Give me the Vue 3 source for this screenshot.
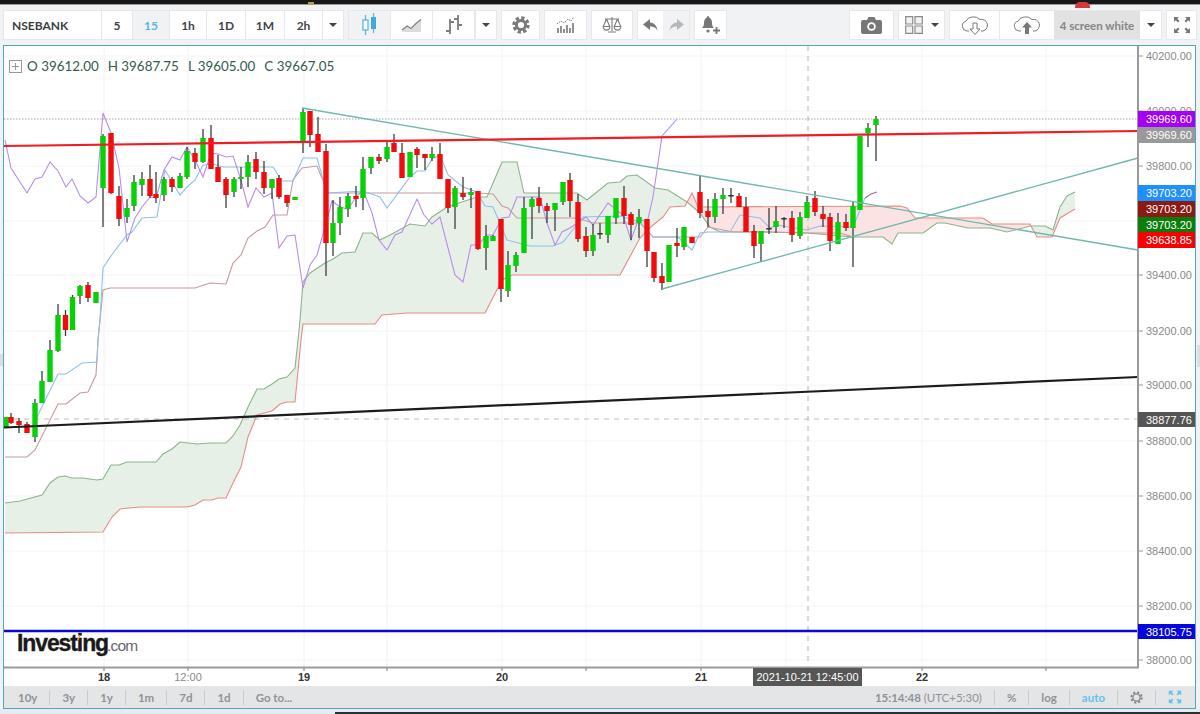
<template>
  <div class="page">
    <div class="top-strip">
      <span class="glint"></span>
      <span class="badge"></span>
    </div>

    <div class="toolbar">
      <div class="group">
        <div class="symbol">NSEBANK</div>
        <div
          v-for="t in timeframes"
          :key="t.label"
          class="btn"
          :class="{ active: t.active }"
          :style="{ width: t.w + 'px' }"
        >{{ t.label }}</div>
        <div class="btn caret-btn"><i class="caret"></i></div>
      </div>

      <div class="group">
        <div class="btn icon-btn wide on">
          <svg width="20" height="26" viewBox="0 0 20 26">
            <path d="M5.5 3v20M13.5 1v20" stroke="#59b6e6" stroke-width="1.2" />
            <rect x="3" y="8" width="5" height="10" fill="#fff" stroke="#59b6e6" stroke-width="1.3" />
            <rect x="11" y="5" width="5" height="12" fill="#3fa9e0" />
          </svg>
        </div>
        <div class="btn icon-btn wide">
          <svg width="22" height="16" viewBox="0 0 22 16">
            <path d="M1 14 6 9.5l4 2.5 5-5 5-4V15H1z" fill="#dcdcdc" />
            <path d="M1 13 6 9l4 2.5 5-5 5-4" fill="none" stroke="#808080" stroke-width="1.3" />
          </svg>
        </div>
        <div class="btn icon-btn wide">
          <svg width="20" height="24" viewBox="0 0 20 24">
            <path d="M6 6v15M2 18h4M6 9h4M14 2v15M10 6h4M14 12h4" fill="none" stroke="#7c7c7c" stroke-width="1.8" />
          </svg>
        </div>
        <div class="btn caret-btn"><i class="caret"></i></div>
      </div>

      <div class="group">
        <div class="btn icon-btn gear-btn">
          <svg width="18" height="18" viewBox="0 0 18 18">
            <circle cx="9" cy="9" r="7" fill="none" stroke="#7a7a7a" stroke-width="3.4" stroke-dasharray="3.2 2.3" />
            <circle cx="9" cy="9" r="4.6" fill="none" stroke="#7a7a7a" stroke-width="3" />
          </svg>
        </div>
      </div>

      <div class="group">
        <div class="btn icon-btn ind-btn">
          <svg width="20" height="20" viewBox="0 0 20 20">
            <path d="M2 18v-5M5 18v-7M8 18v-4M11 18v-8M14 18v-5M17 18V8" stroke="#777" stroke-width="1.6" />
            <path d="M1 9l4-3 3 2 4-4 3 2 3-4" fill="none" stroke="#777" stroke-width="1" stroke-dasharray="1.5 1" />
          </svg>
        </div>
      </div>

      <div class="group">
        <div class="btn icon-btn scale-btn">
          <svg width="20" height="18" viewBox="0 0 20 18">
            <path d="M10 1v14M3 3h14M6 16h8M4.5 3 1.5 10M4.5 3l3 7M15.5 3l-3 7M15.5 3l3 7" fill="none" stroke="#7a7a7a" stroke-width="1.1" />
            <path d="M1.2 10.5h6.6a3.3 3.6 0 0 1-6.6 0zM12.2 10.5h6.6a3.3 3.6 0 0 1-6.6 0z" fill="#fff" stroke="#7a7a7a" stroke-width="1.1" />
          </svg>
        </div>
      </div>

      <div class="group">
        <div class="btn icon-btn undo-btn">
          <svg width="15" height="13" viewBox="0 0 15 13">
            <path d="M7 0 0 5.5 7 11V7.5c3.5 0 6 1 7.5 4.500C14 7 11.5 3.800 7 3.500z" fill="#777" />
          </svg>
        </div>
        <div class="btn icon-btn redo-btn">
          <svg width="15" height="13" viewBox="0 0 15 13">
            <path d="M8 0l7 5.5L8 11V7.5c-3.5 0-6 1-7.5 4.500C1 7 3.5 3.800 8 3.500z" fill="#b4b8bc" />
          </svg>
        </div>
      </div>

      <div class="group">
        <div class="btn icon-btn bell-btn">
          <svg width="20" height="20" viewBox="0 0 20 20">
            <path d="M7 1c.8 0 1.200.8 1.200 1.500C10.500 3.500 11 6 11 8c0 2.500.8 4 2 5H1c1.200-1 2-2.500 2-5 0-2 .5-4.500 2.800-5.500C5.800 1.800 6.200 1 7 1z" fill="#777" />
            <circle cx="7" cy="16" r="1.600" fill="#777" />
            <path d="M15.500 12v7M12 15.500h7" stroke="#777" stroke-width="1.800" />
          </svg>
        </div>
      </div>

      <div class="group push">
        <div class="btn icon-btn cam-btn">
          <svg width="21" height="17" viewBox="0 0 21 17">
            <path d="M2 3h4l1.500-3h6L15 3h4a2 2 0 0 1 2 2v10a2 2 0 0 1-2 2H2a2 2 0 0 1-2-2V5a2 2 0 0 1 2-2z" fill="#777" />
            <circle cx="10.500" cy="9.500" r="4.300" fill="#fff" />
            <circle cx="10.500" cy="9.500" r="2.500" fill="#777" />
          </svg>
        </div>
      </div>

      <div class="group">
        <div class="btn icon-btn layout-btn">
          <svg width="18" height="18" viewBox="0 0 18 18">
            <path d="M.7.7h7V8h-7zM10 .7h7.300V8H10zM.7 10h7v7.300h-7zM10 10h7.300v7.300H10z" fill="#f2f2f2" stroke="#8a8a8a" stroke-width="1.200" />
          </svg>
          <i class="caret"></i>
        </div>
      </div>

      <div class="group">
        <div class="btn icon-btn cloud-btn">
          <svg width="28" height="20" viewBox="0 0 28 20">
            <path d="M8 16H6a5 5 0 0 1-1-9.800A8 6.500 0 0 1 19 4.500 5.800 5.800 0 0 1 22 16h-2" fill="none" stroke="#7a7a7a" stroke-width="1" />
            <path d="M12 8h4v6h3l-5 5.500L9 14h3z" fill="#fff" stroke="#7a7a7a" stroke-width="1" />
          </svg>
        </div>
        <div class="btn icon-btn cloud-btn up">
          <svg width="28" height="20" viewBox="0 0 28 20">
            <path d="M8 16H6a5 5 0 0 1-1-9.800A8 6.500 0 0 1 19 4.500 5.800 5.800 0 0 1 22 16h-2" fill="none" stroke="#7a7a7a" stroke-width="1" />
            <path d="M14 7l5 5.500h-3V19h-4v-6.500H9z" fill="#777" />
          </svg>
        </div>
        <div class="btn preset">4 screen white</div>
        <div class="btn caret-btn preset-caret"><i class="caret"></i></div>
      </div>

      <div class="group">
        <div class="btn icon-btn full-btn">
          <svg width="18" height="18" viewBox="0 0 18 18">
            <path d="M1 1h5L4.300 2.700 6.500 5 5 6.500 2.700 4.300 1 6zM17 1h-5l1.700 1.700L11.500 5 13 6.500l2.300-2.200L17 6zM1 17h5l-1.700-1.700 2.200-2.300L5 11.500l-2.300 2.200L1 12zM17 17h-5l1.700-1.700-2.200-2.300 1.500-1.500 2.300 2.200L17 12z" fill="#777" />
          </svg>
        </div>
      </div>
    </div>

    <div class="chart">
      <svg class="plot" viewBox="4 46 1191 640" width="1191" height="640">
        <!-- grid -->
        <path
          v-for="x in gridX"
          :key="'gx' + x"
          :d="`M${x} 46V667`"
          stroke="#f1f2f3"
          stroke-width="1"
        />
        <path
          v-for="t in ticks"
          :key="'gy' + t.y"
          :d="`M4 ${t.y}H1138`"
          stroke="#f3f4f5"
          stroke-width="1"
        />

        <!-- ichimoku cloud -->
        <path :d="cloud.green" fill="#e7f0e7" />
        <path :d="cloud.red" fill="#fbe3e3" />
        <polyline :points="pts(senkouA)" class="ln" stroke="#8ab58a" />
        <polyline :points="pts(senkouB)" class="ln" stroke="#e58c84" />
        <polyline :points="pts(kijun)" class="ln" stroke="#c79a9a" />
        <polyline :points="pts(tenkan)" class="ln" stroke="#8cc0ee" />
        <polyline :points="pts(chikou)" class="ln" stroke="#b78cec" />
        <polyline points="865,198 871,194 877,192" class="ln" stroke="#9a7098" />

        <!-- levels under the candles -->
        <path d="M4 119H1138" stroke="#a8a8a8" stroke-width="1" stroke-dasharray="1.5 1.5" />
        <path d="M4 419H1138" stroke="#bdbdbd" stroke-width="1" stroke-dasharray="5 5" />
        <path d="M808 46V667" stroke="#b4b4b4" stroke-width="1" stroke-dasharray="5 5" />

        <!-- candles -->
        <g v-for="c in candles" :key="c[0]">
          <path :d="`M${c[0]} ${c[3]}V${c[4]}`" stroke="#3c3c3c" stroke-width="1.3" />
          <rect
            :x="c[0] - 2.7"
            :y="c[1]"
            width="5.4"
            :height="Math.max(c[2] - c[1], 1.5)"
            :fill="bodyColor[c[5]]"
          />
        </g>

        <!-- drawn trend lines -->
        <path d="M302 108 1138 250" stroke="#6fb8ae" stroke-width="1.3" fill="none" />
        <path d="M662 289 1138 158" stroke="#6fb8ae" stroke-width="1.3" fill="none" />
        <path d="M4 146 1138 131" stroke="#f01c24" stroke-width="2.2" fill="none" />
        <path d="M4 427.5 1138 377" stroke="#1c1c1c" stroke-width="2.2" fill="none" />
        <path d="M4 631H1138" stroke="#0808dc" stroke-width="2.4" fill="none" />

        <!-- logo -->
        <text x="17" y="651" class="logo">Investing</text>
        <text x="107" y="651" class="logo-com">.com</text>
        <path d="M77 640l2.500-5 .8 1-1.800 4z" fill="#f0a020" />

        <!-- price axis -->
        <path d="M1138 46V668" stroke="#9a9a9a" stroke-width="2" />
        <g v-for="t in visibleTicks" :key="t.label">
          <path :d="`M1139 ${t.y}h4`" stroke="#999" stroke-width="1" />
          <text x="1146" :y="t.y + 4" class="price">{{ t.label }}</text>
        </g>
        <g v-for="l in priceTags" :key="l.y">
          <rect x="1138" :y="l.y" width="57" :height="l.h" :fill="l.bg" />
          <text x="1146" :y="l.y + l.h / 2 + 4" class="price tag">{{ l.label }}</text>
        </g>

        <!-- time axis -->
        <path d="M4 667.5H1139" stroke="#9a9a9a" stroke-width="2" />
        <path
          v-for="x in gridX"
          :key="'tx' + x"
          :d="`M${x} 668v3`"
          stroke="#777"
          stroke-width="1"
        />
        <text
          v-for="d in days"
          :key="d.label"
          :x="d.x"
          y="681"
          class="day"
          :class="{ minor: d.minor }"
        >{{ d.label }}</text>
        <rect x="753" y="668" width="109" height="18" fill="#565656" />
        <text x="807.5" y="681" class="date-tag">2021-10-21 12:45:00</text>
      </svg>

      <div class="legend">
        <span class="legend-box"></span>
        <span v-for="o in ohlc" :key="o" class="legend-val">{{ o }}</span>
      </div>

      <div class="range-bar">
        <template v-for="(r, i) in ranges" :key="r">
          <i v-if="i" class="sep"></i>
          <span>{{ r }}</span>
        </template>
        <span class="clock">15:14:48 <em>(UTC+5:30)</em></span>
        <i class="sep"></i>
        <span>%</span>
        <i class="sep"></i>
        <span>log</span>
        <i class="sep"></i>
        <span class="auto">auto</span>
        <i class="sep"></i>
        <svg width="13" height="13" viewBox="0 0 18 18">
          <circle cx="9" cy="9" r="7.2" fill="none" stroke="#858585" stroke-width="2.6" stroke-dasharray="3 2.65" />
          <circle cx="9" cy="9" r="5" fill="none" stroke="#858585" stroke-width="1.8" />
        </svg>
        <i class="sep"></i>
        <svg class="expand" width="14" height="14" viewBox="0 0 18 18">
          <path d="M1 1h6L4.800 3 7 5.500 5.500 7 3 4.800 1 7zM17 1h-6l2.200 2L11 5.500 12.500 7 15 4.800 17 7zM1 17h6l-2.200-2L7 12.500 5.500 11 3 13.200 1 11zM17 17h-6l2.200-2-2.200-2.500 1.500-1.500 2.500 2.200 2-2.200z" fill="#69bfe8" />
        </svg>
      </div>
    </div>

    <div class="bottom-strip">
      <span class="dark"></span>
    </div>

    <span class="handle left"></span>
    <span class="handle right"></span>
  </div>
</template>

<script setup>
const timeframes = [
  { label: '5', w: 31 },
  { label: '15', w: 37, active: true },
  { label: '1h', w: 37 },
  { label: '1D', w: 39 },
  { label: '1M', w: 39 },
  { label: '2h', w: 38 },
]

const ohlc = ['O 39612.00', 'H 39687.75', 'L 39605.00', 'C 39667.05']
const ranges = ['10y', '3y', '1y', '1m', '7d', '1d', 'Go to...']

const gridX = [104, 188, 304, 387, 502, 586, 701, 786, 922, 1046]

const days = [
  { label: '18', x: 104 },
  { label: '12:00', x: 188, minor: true },
  { label: '19', x: 304 },
  { label: '20', x: 502 },
  { label: '21', x: 701 },
  { label: '22', x: 922 },
]

const ticks = [
  ['40200.00', 56], ['40000.00', 111], ['39800.00', 166], ['39600.00', 221],
  ['39400.00', 275], ['39200.00', 331], ['39000.00', 385], ['38800.00', 441],
  ['38600.00', 496], ['38400.00', 551], ['38200.00', 606], ['38000.00', 660],
].map(([label, y]) => ({ label, y }))

// 39600 sits fully behind the price tags
const visibleTicks = ticks.filter((t) => t.label !== '39600.00')

const priceTags = [
  { label: '39969.60', y: 111, h: 16, bg: '#a400f5' },
  { label: '39969.60', y: 127, h: 16, bg: '#999999' },
  { label: '39703.20', y: 185, h: 16, bg: '#1e90ff' },
  { label: '39703.20', y: 201, h: 16, bg: '#8b1a12' },
  { label: '39703.20', y: 217, h: 15, bg: '#0b7d0b' },
  { label: '39638.85', y: 232, h: 16, bg: '#f70000' },
  { label: '38877.76', y: 412, h: 15, bg: '#555555' },
  { label: '38105.75', y: 624, h: 15, bg: '#0606dc' },
]

const bodyColor = { g: '#08d008', r: '#f00c0c', d: '#333333' }

// x, body top, body bottom, wick top, wick bottom, colour
const candles = [
  [6, 417, 427, 417, 427, 'g'], [11, 417, 423, 413, 424, 'r'], [19, 421, 425, 418, 433, 'r'],
  [27, 424, 433, 422, 433, 'r'], [35, 403, 437, 399, 442, 'g'], [42, 381, 403, 371, 403, 'g'],
  [50, 350, 382, 340, 382, 'g'], [58, 315, 351, 304, 352, 'g'], [65.5, 315, 330, 310, 336, 'r'],
  [72.5, 297, 330, 295, 330, 'g'], [80, 286, 296, 285, 304, 'g'], [88, 285, 298, 282, 302, 'r'],
  [96, 292, 303, 292, 303, 'g'], [103, 136, 188, 134, 227, 'g'], [111, 133, 193, 133, 194, 'r'],
  [119, 196, 219, 186, 226, 'r'], [127, 208, 217, 199, 223, 'g'], [134, 182, 206, 175, 211, 'g'],
  [142, 179, 185, 172, 196, 'g'], [150, 179, 196, 165, 198, 'r'], [156, 194, 198, 172, 203, 'r'],
  [164, 179, 195, 177, 201, 'g'], [172, 179, 187, 177, 192, 'r'], [180, 176, 188, 173, 188, 'g'],
  [187, 151, 177, 147, 179, 'g'], [195, 153, 162, 148, 169, 'r'], [203, 138, 162, 129, 163, 'g'],
  [211, 138, 169, 125, 169, 'r'], [218, 167, 182, 155, 182, 'r'], [226, 179, 195, 177, 208, 'r'],
  [234, 179, 192, 177, 197, 'g'], [241, 177, 179, 167, 189, 'g'], [248, 162, 177, 155, 187, 'g'],
  [256, 159, 172, 152, 179, 'r'], [264, 172, 188, 161, 194, 'r'], [272, 179, 188, 179, 199, 'g'],
  [279, 178, 197, 175, 199, 'r'], [287, 195, 203, 195, 207, 'r'], [295, 197, 200, 197, 200, 'g'],
  [303, 112, 143, 108, 153, 'g'], [310, 111, 135, 111, 147, 'r'], [318, 134, 152, 117, 152, 'r'],
  [326, 151, 243, 144, 276, 'r'], [333, 223, 243, 200, 256, 'g'], [340, 207, 223, 197, 235, 'g'],
  [348, 196, 209, 193, 217, 'g'], [356, 196, 199, 186, 207, 'r'], [363, 169, 198, 157, 210, 'g'],
  [371, 157, 168, 157, 174, 'g'], [379, 157, 161, 154, 164, 'r'], [387, 147, 159, 140, 162, 'g'],
  [394, 143, 152, 134, 152, 'r'], [402, 153, 178, 143, 178, 'r'], [410, 152, 177, 152, 177, 'g'],
  [417, 149, 155, 147, 168, 'r'], [425, 154, 158, 154, 170, 'r'], [432, 154, 158, 147, 161, 'g'],
  [440, 154, 179, 143, 179, 'r'], [448, 179, 208, 179, 213, 'r'], [455, 188, 207, 186, 229, 'g'],
  [463, 193, 197, 177, 200, 'r'], [471, 192, 195, 188, 208, 'g'], [478, 191, 249, 191, 250, 'r'],
  [486, 236, 248, 225, 270, 'g'], [493, 236, 241, 235, 241, 'g'], [501, 219, 289, 219, 302, 'r'],
  [508, 265, 291, 251, 297, 'g'], [516, 255, 266, 252, 272, 'g'], [524, 208, 253, 197, 253, 'g'],
  [532, 199, 207, 197, 239, 'g'], [539, 198, 206, 187, 213, 'r'], [547, 206, 211, 203, 223, 'r'],
  [555, 203, 210, 203, 231, 'g'], [563, 182, 202, 182, 205, 'g'], [570, 180, 201, 173, 217, 'r'],
  [578, 202, 239, 194, 242, 'r'], [586, 236, 251, 227, 257, 'r'], [593, 235, 251, 224, 256, 'g'],
  [600, 233, 234, 223, 239, 'd'], [608, 216, 235, 216, 243, 'g'], [616, 198, 218, 198, 224, 'g'],
  [624, 198, 216, 186, 224, 'r'], [631, 214, 225, 212, 240, 'r'], [639, 217, 223, 209, 238, 'g'],
  [647, 219, 251, 219, 267, 'r'], [654, 252, 278, 252, 282, 'r'], [662, 276, 283, 263, 290, 'r'],
  [669, 245, 282, 245, 282, 'g'], [677, 243, 246, 228, 257, 'r'], [684, 227, 247, 227, 250, 'g'],
  [692, 237, 243, 237, 243, 'r'], [700, 192, 213, 175, 218, 'r'], [708, 211, 217, 199, 227, 'r'],
  [715, 199, 217, 193, 223, 'g'], [723, 195, 199, 188, 214, 'g'], [731, 195, 196, 188, 203, 'd'],
  [739, 196, 207, 193, 207, 'r'], [746, 207, 232, 197, 232, 'r'], [754, 231, 246, 225, 258, 'r'],
  [761, 231, 244, 231, 262, 'g'], [769, 228, 229, 208, 234, 'd'], [776, 221, 227, 206, 233, 'g'],
  [784, 218, 219, 217, 228, 'd'], [792, 218, 235, 211, 242, 'r'], [800, 217, 236, 212, 239, 'g'],
  [807, 202, 218, 196, 218, 'g'], [815, 198, 212, 191, 216, 'r'], [823, 214, 219, 206, 227, 'r'],
  [830, 217, 241, 213, 251, 'r'], [838, 222, 244, 213, 244, 'g'], [846, 222, 228, 214, 231, 'r'],
  [853, 206, 228, 202, 267, 'g'], [860, 136, 210, 136, 210, 'g'], [868, 128, 133, 123, 147, 'g'],
  [876, 119, 125, 116, 161, 'g'],
]

const chikou = [
  [5, 140], [11, 168], [27, 193], [35, 179], [42, 177], [50, 162], [58, 171], [66, 187], [72, 179],
  [80, 196], [88, 203], [96, 197], [103, 113], [111, 133], [119, 168], [127, 242], [135, 218],
  [142, 207], [150, 197], [156, 198], [164, 170], [172, 157], [180, 160], [187, 147], [195, 160],
  [203, 177], [211, 153], [218, 154], [226, 157], [233, 156], [241, 180], [248, 207], [256, 188],
  [264, 197], [272, 193], [279, 248], [287, 236], [295, 235], [303, 288], [310, 265], [317, 255],
  [325, 227], [332, 201], [340, 207], [348, 209], [356, 197], [363, 190], [372, 213], [379, 240],
  [387, 250], [395, 235], [402, 232], [417, 199], [424, 215], [432, 224], [440, 217], [455, 275],
  [463, 282], [471, 245], [478, 245], [487, 235], [493, 235], [502, 218], [509, 217], [517, 197],
  [540, 197], [547, 223], [555, 245], [562, 232], [570, 228], [586, 217], [593, 225], [608, 203],
  [623, 215], [631, 240], [639, 218], [647, 223], [653, 197], [662, 136], [677, 119],
]

const tenkan = [
  [37, 417], [58, 374], [66, 374], [82, 363], [97, 362], [98, 340], [100, 320], [103, 268], [113, 253],
  [127, 235], [132, 232], [142, 218], [157, 217], [165, 170], [180, 195], [187, 187], [195, 180],
  [203, 165], [213, 164], [223, 167], [273, 167], [282, 181], [293, 181], [303, 158], [317, 158],
  [327, 193], [363, 191], [380, 197], [387, 208], [410, 177], [417, 171], [425, 171], [432, 159],
  [440, 155], [448, 175], [463, 187], [477, 192], [485, 206], [493, 207], [507, 240], [530, 246],
  [553, 246], [563, 242], [583, 217], [620, 216], [640, 222], [653, 237], [678, 237], [692, 250],
  [700, 233], [708, 232], [730, 232], [740, 215], [760, 218], [770, 228], [777, 225], [807, 230],
  [820, 226], [853, 227], [865, 198],
]

const kijun = [
  [5, 457], [27, 457], [35, 450], [50, 420], [58, 404], [66, 404], [80, 393], [88, 392], [96, 375],
  [98, 340], [103, 290], [110, 288], [195, 288], [210, 283], [226, 284], [233, 263], [241, 255],
  [248, 238], [257, 231], [265, 227], [273, 215], [287, 215], [293, 180], [302, 168], [317, 166],
  [328, 193], [478, 193], [493, 194], [502, 206], [508, 208], [517, 218], [577, 218], [593, 223],
  [640, 223], [653, 237], [700, 237], [708, 227], [733, 232], [768, 232], [807, 233], [840, 233],
  [853, 237],
]

const senkouA = [
  [5, 503], [20, 501], [42, 495], [50, 483], [58, 477], [65, 476], [72, 478], [83, 478], [97, 480],
  [103, 479], [111, 465], [119, 465], [127, 462], [156, 462], [163, 454], [172, 449], [180, 442],
  [197, 444], [210, 443], [226, 443], [233, 436], [240, 425], [248, 407], [257, 389], [264, 389],
  [272, 384], [279, 379], [287, 377], [295, 368], [298, 340], [300, 320], [303, 282], [310, 273],
  [325, 263], [333, 259], [342, 253], [355, 252], [363, 233], [372, 233], [380, 240], [390, 235],
  [410, 224], [425, 226], [432, 217], [447, 207], [477, 197], [487, 197], [502, 162], [517, 162],
  [524, 193], [577, 193], [587, 200], [608, 183], [620, 182], [627, 176], [637, 175], [655, 188],
  [668, 190], [687, 202], [700, 213], [710, 227], [720, 232], [768, 232], [807, 233], [853, 237],
  [883, 237], [892, 244], [898, 233], [923, 233], [937, 223], [945, 223], [968, 228], [990, 228],
  [1007, 232], [1023, 228], [1030, 226], [1045, 226], [1053, 230], [1060, 207], [1067, 196], [1075, 192],
]

const senkouB = [
  [5, 533], [103, 532], [112, 517], [120, 509], [128, 508], [140, 507], [187, 507], [195, 505],
  [203, 500], [212, 500], [218, 498], [226, 498], [233, 483], [241, 467], [248, 437], [257, 415],
  [272, 411], [280, 404], [287, 402], [295, 402], [301, 340], [303, 324], [375, 324], [382, 315],
  [407, 313], [485, 313], [502, 280], [512, 275], [620, 275], [640, 238], [653, 225], [663, 217],
  [670, 207], [685, 206], [692, 193], [698, 207], [900, 206], [907, 208], [915, 218], [983, 218],
  [992, 224], [1030, 224], [1037, 237], [1052, 237], [1060, 218], [1075, 209],
]

const pts = (line) => line.map((p) => p.join(',')).join(' ')

const yAt = (line, x) => {
  for (let i = 1; i < line.length; i++) {
    if (x <= line[i][0]) {
      const [x0, y0] = line[i - 1]
      const [x1, y1] = line[i]
      return y0 + ((x - x0) / (x1 - x0)) * (y1 - y0)
    }
  }
  return line[line.length - 1][1]
}

// fill between the two spans, green where A is on top, red where B is
const buildCloud = () => {
  const gTop = []
  const rTop = []
  const bottom = []
  for (let x = 5; x <= 1075; x++) {
    const a = yAt(senkouA, x)
    const b = yAt(senkouB, x)
    gTop.push(`${x} ${a.toFixed(1)}`)
    rTop.push(`${x} ${b.toFixed(1)}`)
    bottom.unshift(`${x} ${Math.max(a, b).toFixed(1)}`)
  }
  return {
    green: 'M' + gTop.concat(bottom).join('L') + 'Z',
    red: 'M' + rTop.concat(bottom).join('L') + 'Z',
  }
}
const cloud = buildCloud()
</script>

<style>
html,
body {
  margin: 0;
  background: #f1f2f4;
}
</style>

<style scoped>
.page {
  position: relative;
  width: 1200px;
  height: 714px;
  display: flex;
  flex-direction: column;
  overflow: hidden;
  background: #f1f2f4;
  font-family: Lato, "Liberation Sans", sans-serif;
}

.top-strip {
  height: 5px;
  background: #181818;
  border-bottom: 1px solid #9a9a9a;
  box-sizing: border-box;
  position: relative;
}

.glint {
  position: absolute;
  left: 308px;
  top: 2px;
  width: 6px;
  height: 3px;
  background: #b89a50;
}

.badge {
  position: absolute;
  left: 1075px;
  top: 2px;
  width: 15px;
  height: 6px;
  border-radius: 5px 5px 0 0;
  background: #d23a3a;
  z-index: 1;
}

.handle {
  position: absolute;
  width: 3px;
  background: #dcdde0;
}

.handle.left {
  left: 0;
  top: 354px;
  height: 12px;
}

.handle.right {
  right: 0;
  top: 345px;
  height: 22px;
}

.toolbar {
  height: 30px;
  margin-top: 5px;
  padding: 0 3px;
  display: flex;
  gap: 4px;
}

.group {
  display: flex;
  height: 30px;
  background: #fff;
  border: 1px solid #e6e8eb;
  box-sizing: border-box;
}

.push {
  margin-left: auto;
}

.symbol {
  width: 97px;
  padding-left: 8px;
  box-sizing: border-box;
  display: flex;
  align-items: center;
  font-size: 12px;
  font-weight: 700;
  color: #3a3f44;
}

.btn {
  display: flex;
  align-items: center;
  justify-content: center;
  border-left: 1px solid #e6e8eb;
  box-sizing: border-box;
  font-size: 12px;
  font-weight: 700;
  color: #3f444a;
}

.btn.active {
  background: #f0f2f4;
  color: #5db4e4;
}

.caret-btn {
  width: 21px;
}

.caret {
  display: block;
  width: 0;
  height: 0;
  border-left: 4px solid transparent;
  border-right: 4px solid transparent;
  border-top: 4px solid #444;
}

.icon-btn {
  border-left: 0;
}

.wide {
  width: 42px;
  border-right: 1px solid #e6e8eb;
}

.on {
  background: #f0f2f4;
}

.gear-btn {
  width: 37px;
}

.ind-btn {
  width: 41px;
}

.scale-btn {
  width: 40px;
}

.undo-btn {
  width: 25px;
}

.redo-btn {
  width: 26px;
  background: #f0f2f4;
}

.bell-btn {
  width: 31px;
}

.cam-btn {
  width: 43px;
}

.layout-btn {
  width: 45px;
  gap: 8px;
}

.cloud-btn {
  width: 50px;
  border-right: 1px solid #e6e8eb;
}

.cloud-btn.up {
  width: 54px;
  border-right: 0;
}

.preset {
  width: 86px;
  border-left: 0;
  background: #e2e2e2;
  color: #858585;
  font-size: 11.5px;
}

.preset-caret {
  width: 21px;
  border-left: 0;
}

.full-btn {
  width: 29px;
}

.chart {
  position: relative;
  height: 664px;
  margin: 5px 4px 0 3px;
  background: #fff;
  border: 1px solid #4ea6c2;
  box-sizing: border-box;
  display: flex;
  flex-direction: column;
}

.plot {
  display: block;
  flex: none;
}

.ln {
  fill: none;
  stroke-width: 1.1;
}

.logo {
  font-family: "Liberation Sans", Arial, sans-serif;
  font-size: 23px;
  font-weight: 700;
  letter-spacing: -1.1px;
  fill: #1a1a1a;
  stroke: #1a1a1a;
  stroke-width: 0.35;
}

.logo-com {
  font-family: "Liberation Sans", Arial, sans-serif;
  font-size: 15.5px;
  letter-spacing: -0.8px;
  fill: #666;
}

.price {
  font-family: "Liberation Sans", Arial, sans-serif;
  font-size: 11px;
  fill: #8a8a8a;
}

.tag {
  fill: #fff;
}

.day {
  font-family: "Liberation Sans", Arial, sans-serif;
  font-size: 11px;
  font-weight: 700;
  text-anchor: middle;
  fill: #333;
}

.day.minor {
  font-weight: 400;
  fill: #8a8a8a;
}

.date-tag {
  font-family: "Liberation Sans", Arial, sans-serif;
  font-size: 11px;
  text-anchor: middle;
  fill: #fff;
}

.legend {
  position: absolute;
  left: 5px;
  top: 12px;
  display: flex;
  align-items: center;
  gap: 9px;
  font-size: 13.4px;
  color: #34594a;
}

.legend-box {
  width: 11px;
  height: 11px;
  margin-right: -4px;
  border: 1px solid #999;
  background:
    linear-gradient(#999, #999) center / 7px 1px no-repeat,
    linear-gradient(#999, #999) center / 1px 7px no-repeat;
}

.range-bar {
  flex: 1;
  display: flex;
  align-items: center;
  gap: 12px;
  padding: 0 13px 0 14px;
  background: #e4e5e7;
  font-size: 11.5px;
  font-weight: 700;
  color: #8f9399;
}

.range-bar span {
  white-space: nowrap;
}

.sep {
  width: 1px;
  height: 15px;
  background: #c9cbce;
}

.clock {
  margin-left: auto;
}

.clock em {
  font-style: normal;
  font-weight: 400;
}

.auto {
  color: #69bfe8;
}

.bottom-strip {
  flex: 1;
  position: relative;
  background: #e9eaec;
}

.dark {
  position: absolute;
  left: 335px;
  right: 0;
  top: 3px;
  bottom: 0;
  background: #2e2e2e;
}
</style>
